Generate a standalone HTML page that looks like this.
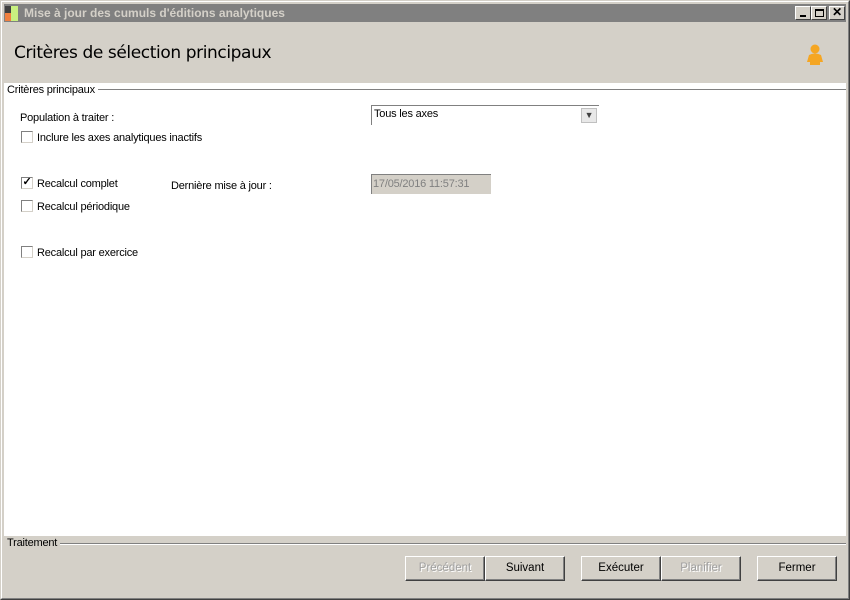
<!DOCTYPE html>
<html><head><style>
*{margin:0;padding:0;box-sizing:border-box}
body{width:850px;height:600px;background:#d4d0c8;font-family:"Liberation Sans",sans-serif;font-size:11px;letter-spacing:-0.2px;color:#000;position:relative;overflow:hidden}
.a{position:absolute}
.frame{left:0;top:0;width:850px;height:600px;border:1px solid #d4d0c8;border-right-color:#404040;border-bottom-color:#404040}
.frame2{left:1px;top:1px;width:848px;height:598px;border:1px solid #fff;border-right-color:#808080;border-bottom-color:#808080}
.title{left:4px;top:4px;width:842px;height:18px;background:#808080;color:#d4d0c8;font-weight:bold;font-size:12px;line-height:18px;padding-left:20px;letter-spacing:0}
.tb{top:6px;width:16px;height:14px;background:#d4d0c8;border:1px solid #fff;border-right-color:#404040;border-bottom-color:#404040}
.hdr{left:14px;top:43px;font-size:17px;font-family:"DejaVu Sans",sans-serif;letter-spacing:-0.4px}
.white{left:4px;top:83px;width:842px;height:453px;background:#fff}
.cb{width:12px;height:12px;border:1px solid #808080;border-right-color:#d4d0c8;border-bottom-color:#d4d0c8;background:#fff}
.btn{top:556px;height:25px;border:1px solid #fff;border-right-color:#404040;border-bottom-color:#404040;background:#d4d0c8;text-align:center;line-height:22px;font-size:11.5px;letter-spacing:0;box-shadow:inset -1px -1px 0 #808080}
.dis{color:#a0a0a0;text-shadow:1px 1px 0 #fff}
</style></head><body>
<div class="a frame"></div><div class="a frame2"></div>
<div class="a title">Mise à jour des cumuls d'éditions analytiques</div>
<div class="a" style="left:5px;top:6px;width:6px;height:7px;background:#404040"></div>
<div class="a" style="left:5px;top:13px;width:6px;height:8px;background:#f08040"></div>
<div class="a" style="left:11px;top:6px;width:7px;height:15px;background:#c8f080"></div>
<div class="a tb" style="left:795px"><div class="a" style="left:4px;top:8px;width:6px;height:2px;background:#000"></div></div>
<div class="a tb" style="left:811px"><div class="a" style="left:3px;top:2px;width:9px;height:8px;border:1px solid #000;border-top-width:2px"></div></div>
<div class="a tb" style="left:829px;font-size:12px;line-height:11px;text-align:center;font-weight:bold">✕</div>
<div class="a hdr">Critères de sélection principaux</div>
<svg class="a" style="left:806px;top:43px" width="18" height="22"><circle cx="9" cy="6" r="4.5" fill="#f5a623"/><path d="M3 12 Q9 9 15 12 L17 19 L14 19 L14 22 L4 22 L4 19 L1 19 Z" fill="#f5a623"/></svg>
<div class="a white"></div>
<div class="a" style="left:4px;top:89px;width:842px;height:1px;background:#808080"></div>
<div class="a" style="left:4px;top:84px;background:#fff;padding:0 3px">Critères principaux</div>
<div class="a" style="left:20px;top:112px">Population à traiter :</div>
<div class="a" style="left:371px;top:105px;width:228px;height:20px;background:#fff;border-top:1px solid #808080;border-left:1px solid #808080"></div>
<div class="a" style="left:374px;top:108px">Tous les axes</div>
<div class="a" style="left:581px;top:108px;width:16px;height:15px;background:#e8e8e8;border:1px solid #c0c0c0;font-size:9px;text-align:center;line-height:13px;color:#404040">▼</div>
<div class="a cb" style="left:21px;top:131px"></div><div class="a" style="left:37px;top:132px">Inclure les axes analytiques inactifs</div>
<div class="a cb" style="left:21px;top:177px;font-size:11px;line-height:9px;text-align:center;font-weight:bold">✓</div><div class="a" style="left:37px;top:178px">Recalcul complet</div>
<div class="a" style="left:171px;top:180px">Dernière mise à jour :</div>
<div class="a" style="left:371px;top:174px;width:120px;height:20px;background:#d4d0c8;border-top:1px solid #808080;border-left:1px solid #808080;color:#808080;padding:3px 0 0 1px">17/05/2016 11:57:31</div>
<div class="a cb" style="left:21px;top:200px"></div><div class="a" style="left:37px;top:201px">Recalcul périodique</div>
<div class="a cb" style="left:21px;top:246px"></div><div class="a" style="left:37px;top:247px">Recalcul par exercice</div>
<div class="a" style="left:4px;top:543px;width:842px;height:1px;background:#808080"></div>
<div class="a" style="left:4px;top:544px;width:842px;height:1px;background:#fff"></div>
<div class="a" style="left:4px;top:537px;background:#d4d0c8;padding:0 3px">Traitement</div>
<div class="a btn dis" style="left:405px;width:80px">Précédent</div>
<div class="a btn" style="left:485px;width:80px">Suivant</div>
<div class="a btn" style="left:581px;width:80px">Exécuter</div>
<div class="a btn dis" style="left:661px;width:80px">Planifier</div>
<div class="a btn" style="left:757px;width:80px">Fermer</div>
</body></html>
